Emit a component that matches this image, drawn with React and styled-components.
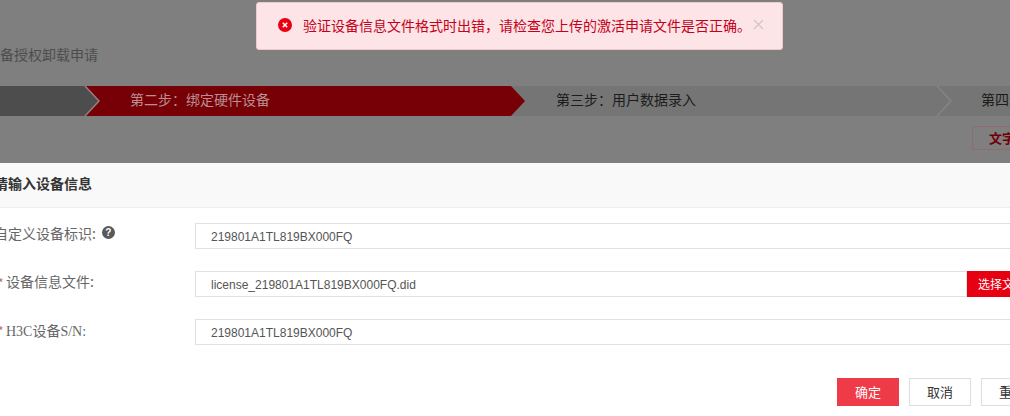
import React from "react";
import styled, { createGlobalStyle } from "styled-components";

const GlobalStyle = createGlobalStyle`
  html, body {
    margin: 0;
    padding: 0;
    background: #fff;
  }
  body {
    font-family: "Liberation Sans", "Noto Sans CJK SC", sans-serif;
  }
`;

const cjk = `"Noto Sans CJK SC", "Liberation Sans", sans-serif`;

const Page = styled.div`
  position: relative;
  width: 1010px;
  height: 416px;
  overflow: hidden;
  display: flex;
  flex-direction: column;
`;

const Backdrop = styled.div`
  height: 163px;
  background: #7f7f7f;
  display: flex;
  flex-direction: column;
  flex: none;
`;

const PageTitle = styled.div`
  margin: 44px 0 0 -14px;
  height: 20px;
  line-height: 20px;
  font-family: ${cjk};
  font-size: 14px;
  color: #4d4d4d;
  white-space: nowrap;
`;

const Stepper = styled.div`
  margin-top: 22px;
  display: flex;
  height: 30px;
  width: 1100px;
  flex: none;
`;

const Step = styled.div`
  position: relative;
  flex: none;
  width: ${(p) => p.$width}px;
  background: ${(p) => p.$bg};
  color: ${(p) => p.$color};
  padding-left: ${(p) => p.$pad}px;
  box-sizing: border-box;
  font-family: ${cjk};
  font-size: 14px;
  line-height: 27px;
  white-space: nowrap;
`;

const Chevron = styled.svg`
  position: absolute;
  top: 0;
  left: 100%;
  z-index: 1;
  margin-left: -1px;
  width: 16px;
  height: 30px;
`;

const ActionRow = styled.div`
  display: flex;
  justify-content: flex-start;
  padding: 10px 0 0 972px;
`;

const TextButton = styled.div`
  flex: none;
  width: 70px;
  height: 24px;
  box-sizing: border-box;
  border: 1px solid #8f6a6e;
  border-radius: 2px;
  padding-left: 16px;
  font-family: ${cjk};
  font-weight: 700;
  font-size: 13px;
  line-height: 22px;
  color: #700008;
  white-space: nowrap;
`;

const Panel = styled.div`
  flex: 1;
  background: #fff;
  display: flex;
  flex-direction: column;
`;

const PanelHeader = styled.div`
  height: 45px;
  box-sizing: border-box;
  background: #f9f9f9;
  border-bottom: 1px solid #eeeeee;
  margin-left: -6px;
  font-family: ${cjk};
  font-weight: 700;
  font-size: 14px;
  line-height: 41px;
  color: #333;
`;

const Form = styled.div`
  padding-top: 15px;
  display: flex;
  flex-direction: column;
  gap: 22px;
`;

const Row = styled.div`
  display: flex;
  height: 26px;
`;

const Label = styled.div`
  flex: none;
  width: 201px;
  margin-left: -6px;
  display: flex;
  align-items: center;
  gap: 6px;
  height: 20px;
  font-family: ${cjk};
  font-size: 14px;
  color: #666;
  white-space: nowrap;
`;

const Required = styled.span`
  color: #b9727a;
  font-size: 12px;
  width: 3px;
  margin: 2px -1px 0 4px;
`;

const SerifPart = styled.span`
  font-family: "Liberation Serif", ${cjk};
  padding-top: 1px;
`;

const Hint = styled.span`
  width: 13px;
  height: 13px;
  border-radius: 50%;
  background: #595959;
  color: #fff;
  font-family: "Liberation Sans", sans-serif;
  font-size: 10px;
  font-weight: 700;
  line-height: 13px;
  text-align: center;
  flex: none;
  margin-top: -1px;
`;

const Field = styled.div`
  flex: 1;
  box-sizing: border-box;
  height: 26px;
  min-width: 0;
  margin-right: ${(p) => (p.$withButton ? 0 : -20)}px;
  border: 1px solid #e1e1e1;
  padding-left: 15px;
  font-size: 12px;
  line-height: 26px;
  color: #555;
  white-space: nowrap;
`;

const PickButton = styled.div`
  flex: none;
  width: 43px;
  height: 26px;
  background: #e60012;
  color: #fff;
  padding-left: 11px;
  box-sizing: border-box;
  font-family: ${cjk};
  font-size: 12px;
  line-height: 26px;
  white-space: nowrap;
  overflow: hidden;
`;

const Footer = styled.div`
  margin-top: 33px;
  padding-left: 837px;
  display: flex;
  gap: 10px;
`;

const Button = styled.div`
  flex: none;
  width: 62px;
  height: 28px;
  box-sizing: border-box;
  background: ${(p) => (p.$primary ? "#ef3a47" : "#fff")};
  border: 1px solid ${(p) => (p.$primary ? "#ef3a47" : "#dedede")};
  color: ${(p) => (p.$primary ? "#fff" : "#333")};
  font-family: ${cjk};
  font-size: 13px;
  line-height: 26px;
  text-align: center;
  white-space: nowrap;
`;

const Toast = styled.div`
  position: absolute;
  top: 2px;
  left: 256px;
  width: 527px;
  height: 48px;
  box-sizing: border-box;
  background: #fde4e6;
  border: 1px solid #efc9cc;
  border-radius: 3px;
  display: flex;
  align-items: center;
  padding: 0 0 3px 21px;
  font-family: ${cjk};
  font-size: 14px;
  color: #c4001a;
  white-space: nowrap;
`;

const ToastIcon = styled.svg`
  width: 14px;
  height: 14px;
  flex: none;
  margin-right: 11px;
`;

const ToastClose = styled.svg`
  width: 11px;
  height: 11px;
  flex: none;
  margin-left: 2px;
`;

function StepArrow({ fill, edge }) {
  return (
    <Chevron viewBox="0 0 16 30">
      <path d="M0 0 L1 0 L15 15 L1 30 L0 30 Z" fill={fill} />
      <path d="M1 0 L15 15 L1 30" fill="none" stroke={edge} strokeWidth="1.5" />
    </Chevron>
  );
}

export default function App() {
  return (
    <Page>
      <GlobalStyle />
      <Backdrop>
        <PageTitle>设备授权卸载申请</PageTitle>
        <Stepper>
          <Step $width={85} $bg="#4d4d4d" $color="#ccc" $pad={0}>
            <StepArrow fill="#4d4d4d" edge="#958080" />
          </Step>
          <Step $width={425} $bg="#770006" $color="#b98f91" $pad={45}>
            第二步：绑定硬件设备
            <StepArrow fill="#770006" edge="#770006" />
          </Step>
          <Step $width={427} $bg="#757575" $color="#1c1c1c" $pad={46}>
            第三步：用户数据录入
            <StepArrow fill="#757575" edge="#858585" />
          </Step>
          <Step $width={120} $bg="#757575" $color="#1c1c1c" $pad={44}>
            第四步：完成
          </Step>
        </Stepper>
        <ActionRow>
          <TextButton>文字</TextButton>
        </ActionRow>
      </Backdrop>
      <Panel>
        <PanelHeader>请输入设备信息</PanelHeader>
        <Form>
          <Row>
            <Label>
              自定义设备标识:
              <Hint>?</Hint>
            </Label>
            <Field>219801A1TL819BX000FQ</Field>
          </Row>
          <Row>
            <Label>
              <Required>*</Required>
              设备信息文件:
            </Label>
            <Field $withButton>license_219801A1TL819BX000FQ.did</Field>
            <PickButton>选择文件</PickButton>
          </Row>
          <Row>
            <Label>
              <Required>*</Required>
              <SerifPart>H3C设备S/N:</SerifPart>
            </Label>
            <Field>219801A1TL819BX000FQ</Field>
          </Row>
        </Form>
        <Footer>
          <Button $primary>确定</Button>
          <Button>取消</Button>
          <Button>重置</Button>
        </Footer>
      </Panel>
      <Toast>
        <ToastIcon viewBox="0 0 14 14">
          <circle cx="7" cy="7" r="7" fill="#e60012" />
          <path d="M4.8 4.8 L9.2 9.2 M9.2 4.8 L4.8 9.2" stroke="#fff" strokeWidth="1.5" />
        </ToastIcon>
        验证设备信息文件格式时出错，请检查您上传的激活申请文件是否正确。
        <ToastClose viewBox="0 0 11 11">
          <path d="M1 1 L10 10 M10 1 L1 10" stroke="#d3c6c8" strokeWidth="1.3" />
        </ToastClose>
      </Toast>
    </Page>
  );
}
